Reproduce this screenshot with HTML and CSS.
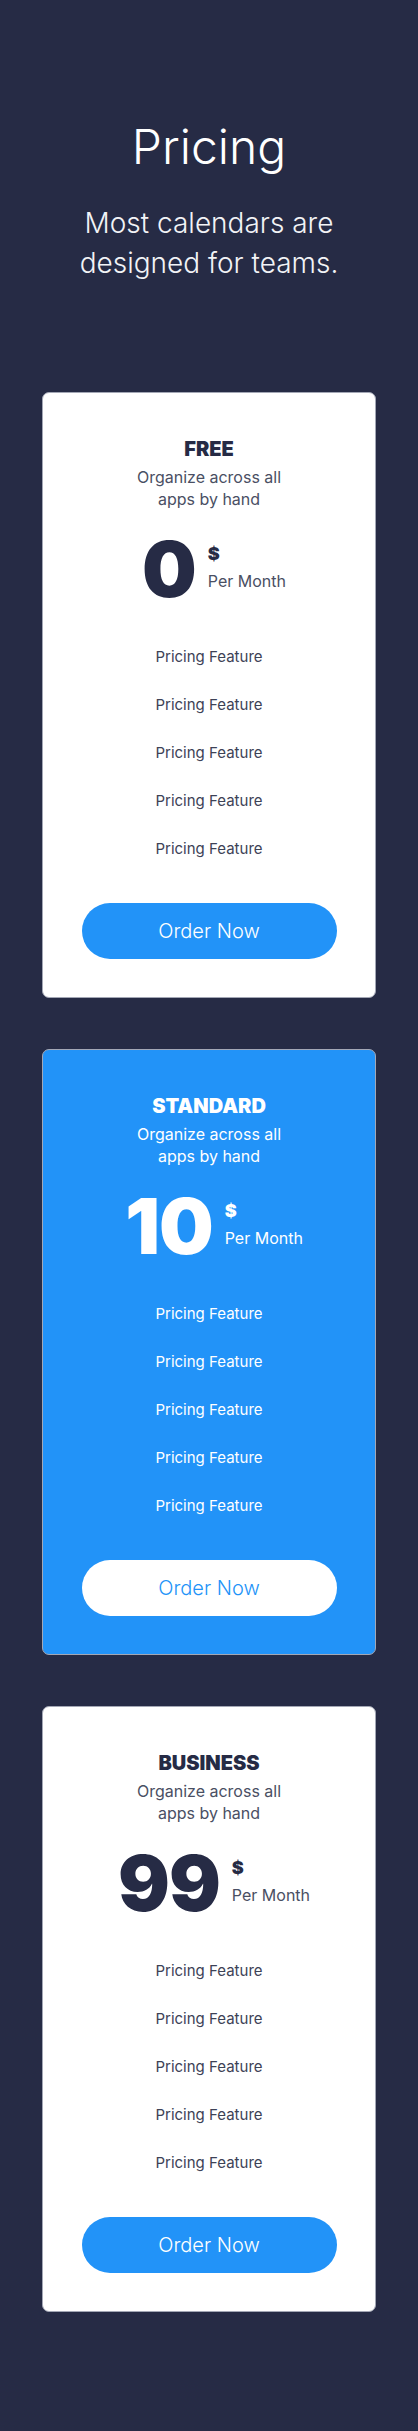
FILE: index.html
```html
<!DOCTYPE html>
<html lang="en">
<head>
<meta charset="utf-8">
<title>Pricing</title>
<link rel="stylesheet" href="styles.css">
</head>
<body>
<section class="pricing">
  <header class="pricing-head">
    <h1 class="pricing-title">Pricing</h1>
    <p class="pricing-sub">Most calendars are designed for teams.</p>
  </header>
  <div class="plans">
    <article class="plan">
      <h2 class="plan-name">FREE</h2>
      <p class="plan-desc">Organize across all<br>apps by hand</p>
      <div class="plan-price">
        <span class="price-num">0</span>
        <span class="price-side"><span class="price-cur">$</span><span class="price-per">Per Month</span></span>
      </div>
      <ul class="plan-features">
        <li>Pricing Feature</li>
        <li>Pricing Feature</li>
        <li>Pricing Feature</li>
        <li>Pricing Feature</li>
        <li>Pricing Feature</li>
      </ul>
      <a class="plan-btn" href="#">Order Now</a>
    </article>
    <article class="plan plan-featured">
      <h2 class="plan-name">STANDARD</h2>
      <p class="plan-desc">Organize across all<br>apps by hand</p>
      <div class="plan-price">
        <span class="price-num">10</span>
        <span class="price-side"><span class="price-cur">$</span><span class="price-per">Per Month</span></span>
      </div>
      <ul class="plan-features">
        <li>Pricing Feature</li>
        <li>Pricing Feature</li>
        <li>Pricing Feature</li>
        <li>Pricing Feature</li>
        <li>Pricing Feature</li>
      </ul>
      <a class="plan-btn" href="#">Order Now</a>
    </article>
    <article class="plan">
      <h2 class="plan-name">BUSINESS</h2>
      <p class="plan-desc">Organize across all<br>apps by hand</p>
      <div class="plan-price">
        <span class="price-num">99</span>
        <span class="price-side"><span class="price-cur">$</span><span class="price-per">Per Month</span></span>
      </div>
      <ul class="plan-features">
        <li>Pricing Feature</li>
        <li>Pricing Feature</li>
        <li>Pricing Feature</li>
        <li>Pricing Feature</li>
        <li>Pricing Feature</li>
      </ul>
      <a class="plan-btn" href="#">Order Now</a>
    </article>
  </div>
</section>
</body>
</html>
```
FILE: styles.css
```css
* { box-sizing: border-box; }
html, body { margin: 0; padding: 0; }
body {
  background: #262b45;
  font-family: Inter, "Noto Sans", sans-serif;
  color: #ffffff;
}
.pricing {
  padding: 118px 0 119px;
  display: flex;
  flex-direction: column;
  align-items: center;
}
.pricing-head {
  text-align: center;
  display: flex;
  flex-direction: column;
  align-items: center;
}
.pricing-title {
  margin: 0;
  font-size: 48px;
  line-height: 58px;
  font-weight: 300;
  color: #ffffff;
}
.pricing-sub {
  margin: 27px 0 0;
  max-width: 300px;
  font-size: 28px;
  line-height: 40px;
  font-weight: 300;
  color: #f2f3f6;
}
.plans {
  margin-top: 109px;
  display: flex;
  flex-direction: column;
  gap: 51px;
  width: 334px;
}
.plan {
  background: #ffffff;
  border: 1px solid #a3a7b5;
  border-radius: 7px;
  padding: 44px 0 0;
  height: 606px;
  display: flex;
  flex-direction: column;
  align-items: center;
  text-align: center;
  color: #262b45;
}
.plan-name {
  margin: 0;
  font-size: 20px;
  line-height: 24px;
  font-weight: 900;
  color: #262b45;
}
.plan-desc {
  margin: 5px 0 0;
  font-size: 16px;
  line-height: 22px;
  font-weight: 400;
  color: #4a4f63;
}
.plan-price {
  margin-top: 21px;
  display: flex;
  align-items: flex-start;
  gap: 12px;
  padding-left: 10px;
}
.price-num {
  font-size: 77px;
  line-height: 77px;
  font-weight: 900;
  letter-spacing: -1px;
  color: #262b45;
}
.price-side {
  display: flex;
  flex-direction: column;
  align-items: flex-start;
  padding-top: 12px;
}
.price-cur {
  font-size: 18px;
  line-height: 22px;
  font-weight: 900;
  color: #262b45;
}
.price-per {
  margin-top: 5px;
  font-size: 16px;
  line-height: 22px;
  font-weight: 400;
  color: #4a4f63;
}
.plan-features {
  list-style: none;
  margin: 25px 0 0;
  padding: 0;
}
.plan-features li {
  height: 48px;
  line-height: 48px;
  font-size: 15px;
  color: #3d4256;
}
.plan-btn {
  margin-top: 30px;
  width: 255px;
  height: 56px;
  flex: none;
  border-radius: 28px;
  background: #2293f8;
  color: #ffffff;
  font-size: 20px;
  font-weight: 300;
  text-decoration: none;
  display: flex;
  align-items: center;
  justify-content: center;
}
.plan-featured {
  background: #2293f8;
  color: #ffffff;
}
.plan-featured .plan-name,
.plan-featured .price-num,
.plan-featured .price-cur,
.plan-featured .price-per,
.plan-featured .plan-desc,
.plan-featured .plan-features li {
  color: #ffffff;
}
.plan-featured .plan-btn {
  background: #ffffff;
  color: #2293f8;
}
```
